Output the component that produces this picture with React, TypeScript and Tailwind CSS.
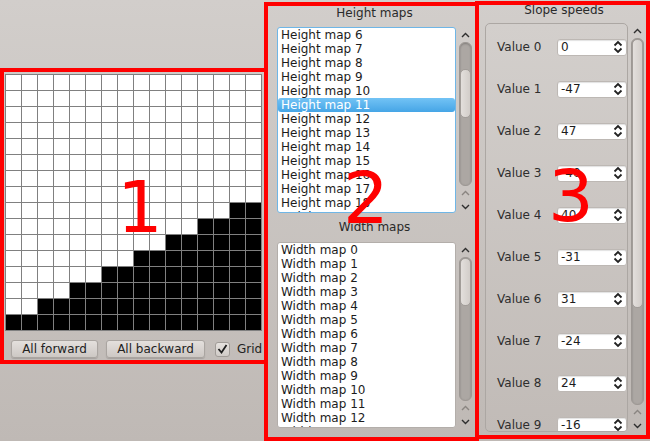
const heightItems = Array.from({ length: 14 }, (_, i) => `Height map ${i + 6}`);
const widthItems = Array.from({ length: 14 }, (_, i) => `Width map ${i}`);
const values = [0, -47, 47, -40, 40, -31, 31, -24, 24, -16];

const isBlack = (r: number, c: number) => r >= 8 && c >= 2 * (15 - r);

const ChevUp = ({ dim }: { dim?: boolean }) => (
  <svg width="9" height="6" viewBox="0 0 9 6">
    <path d="M1 5 L4.5 1.5 L8 5" fill="none" stroke={dim ? "#8a8581" : "#2e2e2e"} strokeWidth="1.4" />
  </svg>
);

const ChevDown = () => (
  <svg width="9" height="6" viewBox="0 0 9 6">
    <path d="M1 1 L4.5 4.5 L8 1" fill="none" stroke="#2e2e2e" strokeWidth="1.4" />
  </svg>
);

const SpinIcon = () => (
  <svg width="10" height="14" viewBox="0 0 10 14">
    <path d="M1.5 5.5 L5 2 L8.5 5.5" fill="none" stroke="#222" strokeWidth="1.8" />
    <path d="M1.5 8.5 L5 12 L8.5 8.5" fill="none" stroke="#222" strokeWidth="1.8" />
  </svg>
);

const ScrollBar = ({ offset, thumb }: { offset: string; thumb: string }) => {
  return (
    <div className="w-[13px] h-full flex flex-col items-center">
      {/* top arrow */}
      <div className="h-[15px] flex items-center justify-center">
        <ChevUp />
      </div>
      {/* track */}
      <div className="flex-1 w-[13px] rounded-[6px] bg-[#aca7a3] border border-[#9d9894] shadow-[inset_0_1px_2px_rgba(0,0,0,0.25)] flex flex-col items-center">
        <div className={offset} />
        <div
          className={`${thumb} w-[11px] rounded-[5px] bg-gradient-to-r from-[#e3dfdc] to-[#d2cdc9] border border-[#a29d99]`}
        />
      </div>
      {/* bottom arrows */}
      <div className="h-[27px] flex flex-col items-center justify-center gap-[8px] pt-[1px]">
        <ChevUp dim />
        <ChevDown />
      </div>
    </div>
  );
};

const ListBox = ({
  items,
  selected,
  focused,
  offset,
  thumb,
}: {
  items: string[];
  selected?: number;
  focused?: boolean;
  offset: string;
  thumb: string;
}) => {
  return (
    <div className="flex gap-[3px] h-[186px]">
      <div
        className={`w-[179px] h-full overflow-hidden rounded-[3px] border bg-white ${
          focused ? "border-[#6fb6e6]" : "border-[#b3aeaa]"
        }`}
      >
        {items.map((t, i) => (
          <div
            key={t}
            className={`h-[14px] leading-[14px] pl-[3px] whitespace-nowrap ${
              i === selected
                ? "bg-gradient-to-b from-[#72c3f5] to-[#45a5e6] text-white rounded-[3px]"
                : "text-[#1c1c1c]"
            }`}
          >
            {t}
          </div>
        ))}
      </div>
      <ScrollBar offset={offset} thumb={thumb} />
    </div>
  );
};

const Button = ({ label, width }: { label: string; width: string }) => (
  <div
    className={`${width} h-[18px] rounded-[3px] border border-[#aaa5a1] bg-gradient-to-b from-[#e4e0dd] to-[#cdc8c4] shadow-[0_1px_1px_rgba(0,0,0,0.15)] flex items-center justify-center text-[#222] leading-none`}
  >
    {label}
  </div>
);

export default function App() {
  return (
    <div className="relative w-[650px] h-[441px] overflow-hidden flex bg-gradient-to-b from-[#d2cecb] to-[#bfb9b5] font-['DejaVu_Sans',sans-serif] text-[12px]">
      {/* left: grid editor */}
      <div className="w-[268px] pl-[5px] pt-[74px] flex flex-col">
        <div className="w-[257px] bg-[#808080] p-px grid grid-cols-[repeat(16,15px)] gap-px">
          {Array.from({ length: 256 }, (_, k) => {
            const r = Math.floor(k / 16);
            const c = k % 16;
            return (
              <div key={k} className={`h-[15px] ${isBlack(r, c) ? "bg-black" : "bg-white"}`} />
            );
          })}
        </div>
        <div className="mt-[9px] ml-[6px] flex items-center">
          <Button label="All forward" width="w-[87px]" />
          <div className="w-[8px]" />
          <Button label="All backward" width="w-[99px]" />
          <div className="ml-[10px] w-[15px] h-[15px] rounded-[3px] border border-[#a19c98] bg-gradient-to-b from-[#e6e2df] to-[#d0cbc7] flex items-center justify-center">
            <svg width="11" height="10" viewBox="0 0 11 10">
              <path d="M1.5 5 L4.5 8.5 L9.5 1" fill="none" stroke="#1e1e1e" strokeWidth="1.8" />
            </svg>
          </div>
          <span className="ml-[7px] text-[#222]">Grid</span>
        </div>
      </div>

      {/* middle: map lists */}
      <div className="w-[209px] pl-[9px] pt-[6px] flex flex-col">
        <div className="w-[195px] h-[14px] leading-[14px] text-center text-[#2a2a2a]">Height maps</div>
        <div className="mt-[7px]">
          <ListBox items={heightItems} selected={5} focused offset="h-[26px]" thumb="h-[49px]" />
        </div>
        <div className="mt-[7px] w-[195px] h-[14px] leading-[14px] text-center text-[#2a2a2a]">Width maps</div>
        <div className="mt-[8px]">
          <ListBox items={widthItems} offset="h-0" thumb="h-[48px]" />
        </div>
      </div>

      {/* right: slope speeds */}
      <div className="w-[173px] pl-[8px] pt-[3px] flex flex-col">
        <div className="w-[158px] h-[14px] leading-[14px] text-center text-[#2a2a2a]">Slope speeds</div>
        <div className="mt-[6px] flex gap-[3px] h-[409px]">
          <div className="w-[143px] h-full overflow-hidden rounded-[5px] border border-[#aca7a3] bg-gradient-to-b from-[#d3cfcc] to-[#c1bbb7] pt-[2px] pl-[11px]">
            {values.map((v, i) => (
              <div key={i} className="h-[42px] flex items-center">
                <span className="w-[60px] text-[#2e2e2e]">Value {i}</span>
                <div className="w-[70px] h-[17px] shrink-0 rounded-[3px] border border-[#bdb8b4] bg-white shadow-[inset_0_1px_1px_rgba(0,0,0,0.12)] flex items-center justify-between pl-[3px] pr-[3px] text-[#1c1c1c]">
                  <span className="leading-none">{v}</span>
                  <SpinIcon />
                </div>
              </div>
            ))}
          </div>
          <ScrollBar offset="h-0" thumb="h-[269px]" />
        </div>
      </div>

      {/* red annotation overlays */}
      <div className="absolute left-0 top-[68px] w-[268px] h-[296px] border-4 border-[#ff0000] pointer-events-none" />
      <div className="absolute left-[264px] top-[2px] w-[215px] h-[439px] border-4 border-[#ff0000] pointer-events-none" />
      <div className="absolute left-[475px] top-[1px] w-[175px] h-[438px] border-4 border-[#ff0000] pointer-events-none" />
      <div className="absolute left-[117px] top-[171px] text-[72px] leading-none text-[#ff0000] pointer-events-none">1</div>
      <div className="absolute left-[343px] top-[162px] text-[72px] leading-none text-[#ff0000] pointer-events-none">2</div>
      <div className="absolute left-[548px] top-[160px] text-[72px] leading-none text-[#ff0000] pointer-events-none">3</div>
    </div>
  );
}
